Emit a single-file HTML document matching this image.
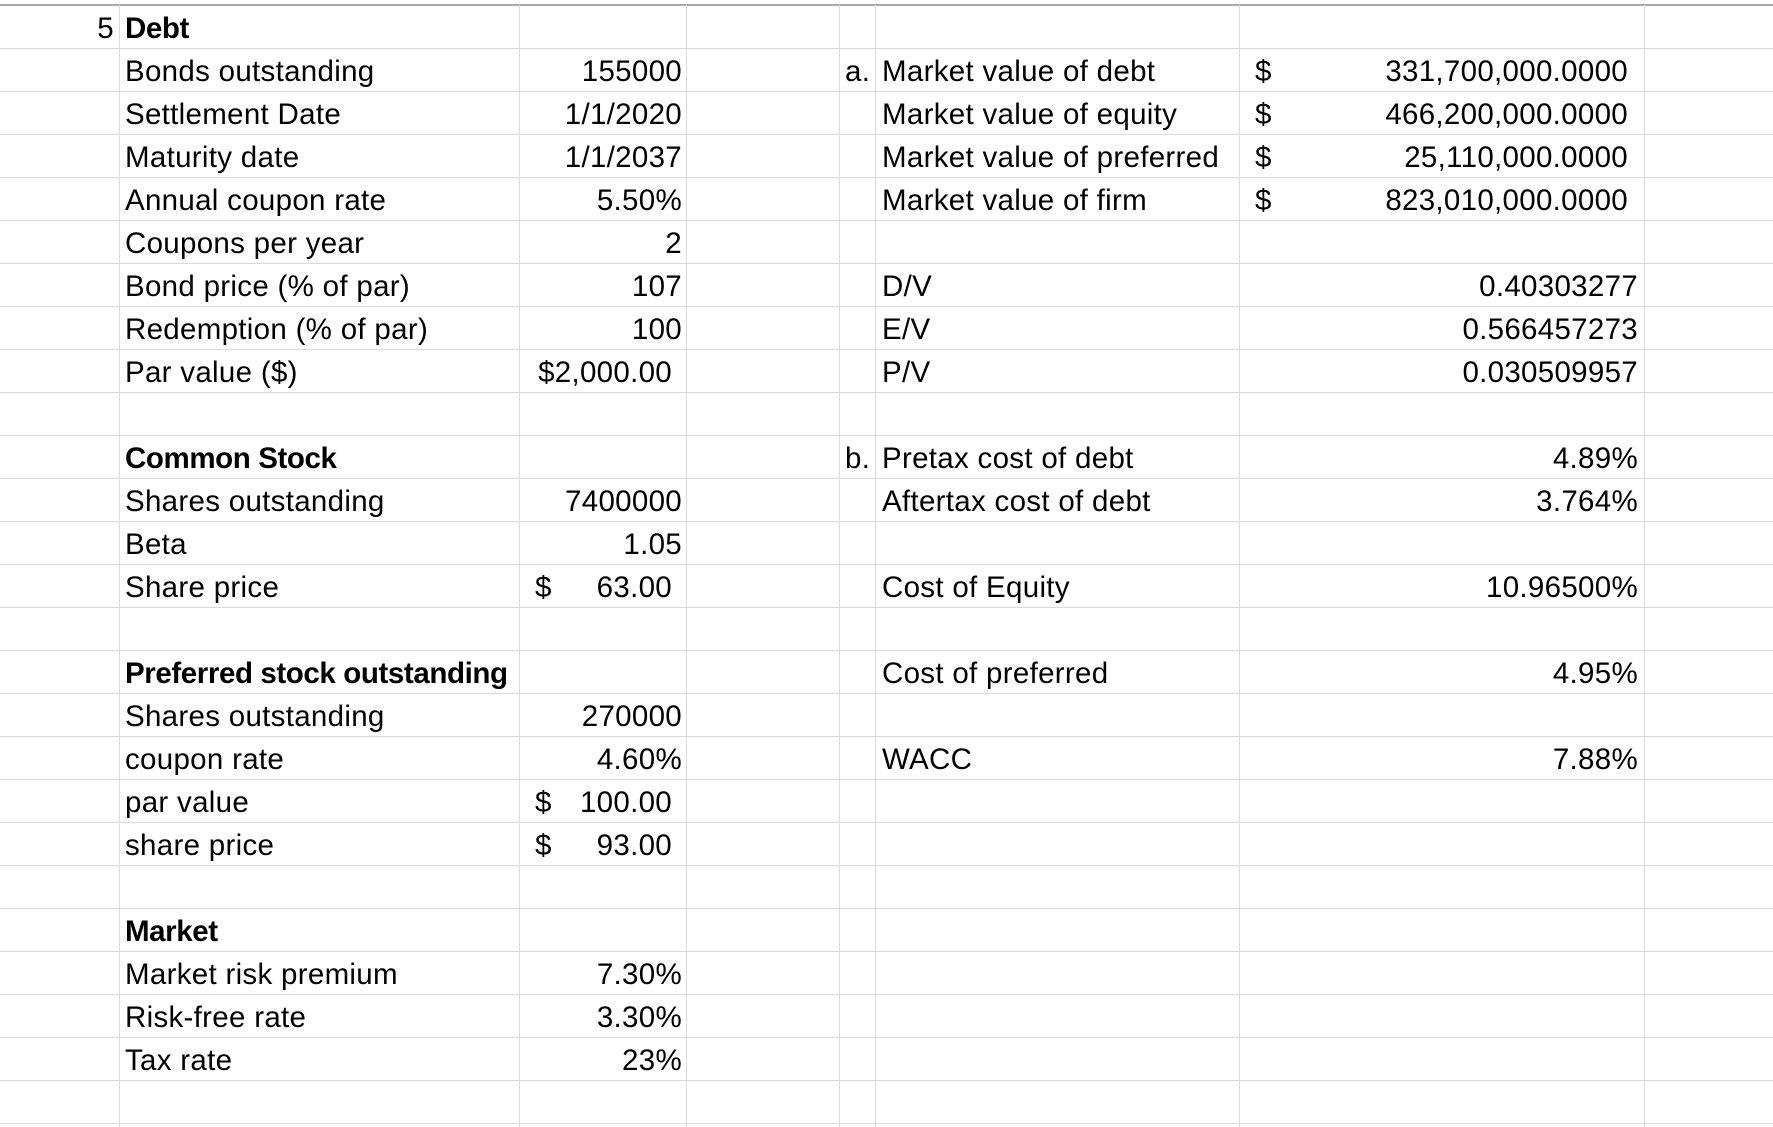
<!DOCTYPE html>
<html><head><meta charset="utf-8"><style>
html,body{margin:0;padding:0}
body{width:1773px;height:1127px;position:relative;overflow:hidden;background:#fff;font-family:"Liberation Sans",sans-serif;font-size:29.5px;color:#000}
.h{position:absolute;left:0;width:1773px;height:1px;background:#dadada}
.v{position:absolute;top:5px;height:1122px;width:1px;background:#dadada}
.t{position:absolute;height:43px;line-height:47px;white-space:nowrap;letter-spacing:0.3px}
.b{font-weight:bold;letter-spacing:-0.4px}
</style></head><body>
<div style="position:absolute;left:0;top:4px;width:1773px;height:2px;background:#a8a8a8"></div>
<div class="v" style="left:119px"></div><div class="v" style="left:519px"></div><div class="v" style="left:686px"></div><div class="v" style="left:839px"></div><div class="v" style="left:875px"></div><div class="v" style="left:1239px"></div><div class="v" style="left:1644px"></div>
<div class="h" style="top:48px"></div><div class="h" style="top:91px"></div><div class="h" style="top:134px"></div><div class="h" style="top:177px"></div><div class="h" style="top:220px"></div><div class="h" style="top:263px"></div><div class="h" style="top:306px"></div><div class="h" style="top:349px"></div><div class="h" style="top:392px"></div><div class="h" style="top:435px"></div><div class="h" style="top:478px"></div><div class="h" style="top:521px"></div><div class="h" style="top:564px"></div><div class="h" style="top:607px"></div><div class="h" style="top:650px"></div><div class="h" style="top:693px"></div><div class="h" style="top:736px"></div><div class="h" style="top:779px"></div><div class="h" style="top:822px"></div><div class="h" style="top:865px"></div><div class="h" style="top:908px"></div><div class="h" style="top:951px"></div><div class="h" style="top:994px"></div><div class="h" style="top:1037px"></div><div class="h" style="top:1080px"></div><div class="h" style="top:1123px"></div>

<div class="t" style="top:5px;right:1659px">5</div>
<div class="t b" style="top:5px;left:125px">Debt</div>
<div class="t" style="top:48px;left:125px">Bonds outstanding</div><div class="t" style="top:48px;right:1091px">155000</div>
<div class="t" style="top:91px;left:125px">Settlement Date</div><div class="t" style="top:91px;right:1091px">1/1/2020</div>
<div class="t" style="top:134px;left:125px">Maturity date</div><div class="t" style="top:134px;right:1091px">1/1/2037</div>
<div class="t" style="top:177px;left:125px">Annual coupon rate</div><div class="t" style="top:177px;right:1091px">5.50%</div>
<div class="t" style="top:220px;left:125px">Coupons per year</div><div class="t" style="top:220px;right:1091px">2</div>
<div class="t" style="top:263px;left:125px">Bond price (% of par)</div><div class="t" style="top:263px;right:1091px">107</div>
<div class="t" style="top:306px;left:125px">Redemption (% of par)</div><div class="t" style="top:306px;right:1091px">100</div>
<div class="t" style="top:349px;left:125px">Par value ($)</div><div class="t" style="top:349px;right:1101px">$2,000.00</div>

<div class="t b" style="top:435px;left:125px">Common Stock</div>
<div class="t" style="top:478px;left:125px">Shares outstanding</div><div class="t" style="top:478px;right:1091px">7400000</div>
<div class="t" style="top:521px;left:125px">Beta</div><div class="t" style="top:521px;right:1091px">1.05</div>
<div class="t" style="top:564px;left:125px">Share price</div><div class="t" style="top:564px;left:535px">$</div><div class="t" style="top:564px;right:1101px">63.00</div>

<div class="t b" style="top:650px;left:125px">Preferred stock outstanding</div>
<div class="t" style="top:693px;left:125px">Shares outstanding</div><div class="t" style="top:693px;right:1091px">270000</div>
<div class="t" style="top:736px;left:125px">coupon rate</div><div class="t" style="top:736px;right:1091px">4.60%</div>
<div class="t" style="top:779px;left:125px">par value</div><div class="t" style="top:779px;left:535px">$</div><div class="t" style="top:779px;right:1101px">100.00</div>
<div class="t" style="top:822px;left:125px">share price</div><div class="t" style="top:822px;left:535px">$</div><div class="t" style="top:822px;right:1101px">93.00</div>

<div class="t b" style="top:908px;left:125px">Market</div>
<div class="t" style="top:951px;left:125px">Market risk premium</div><div class="t" style="top:951px;right:1091px">7.30%</div>
<div class="t" style="top:994px;left:125px">Risk-free rate</div><div class="t" style="top:994px;right:1091px">3.30%</div>
<div class="t" style="top:1037px;left:125px">Tax rate</div><div class="t" style="top:1037px;right:1091px">23%</div>

<div class="t" style="top:48px;left:845px">a.</div>
<div class="t" style="top:48px;left:882px">Market value of debt</div><div class="t" style="top:48px;left:1255px">$</div><div class="t" style="top:48px;right:145px">331,700,000.0000</div>
<div class="t" style="top:91px;left:882px">Market value of equity</div><div class="t" style="top:91px;left:1255px">$</div><div class="t" style="top:91px;right:145px">466,200,000.0000</div>
<div class="t" style="top:134px;left:882px">Market value of preferred</div><div class="t" style="top:134px;left:1255px">$</div><div class="t" style="top:134px;right:145px">25,110,000.0000</div>
<div class="t" style="top:177px;left:882px">Market value of firm</div><div class="t" style="top:177px;left:1255px">$</div><div class="t" style="top:177px;right:145px">823,010,000.0000</div>
<div class="t" style="top:263px;left:882px">D/V</div><div class="t" style="top:263px;right:135px">0.40303277</div>
<div class="t" style="top:306px;left:882px">E/V</div><div class="t" style="top:306px;right:135px">0.566457273</div>
<div class="t" style="top:349px;left:882px">P/V</div><div class="t" style="top:349px;right:135px">0.030509957</div>
<div class="t" style="top:435px;left:845px">b.</div>
<div class="t" style="top:435px;left:882px">Pretax cost of debt</div><div class="t" style="top:435px;right:135px">4.89%</div>
<div class="t" style="top:478px;left:882px">Aftertax cost of debt</div><div class="t" style="top:478px;right:135px">3.764%</div>
<div class="t" style="top:564px;left:882px">Cost of Equity</div><div class="t" style="top:564px;right:135px">10.96500%</div>
<div class="t" style="top:650px;left:882px">Cost of preferred</div><div class="t" style="top:650px;right:135px">4.95%</div>
<div class="t" style="top:736px;left:882px">WACC</div><div class="t" style="top:736px;right:135px">7.88%</div>
</body></html>
